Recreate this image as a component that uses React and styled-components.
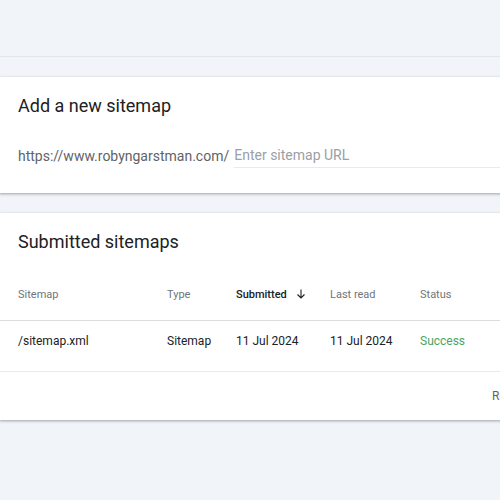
import React from 'react'
import styled, { createGlobalStyle } from 'styled-components'

const Global = createGlobalStyle`
  html, body {
    margin: 0;
    padding: 0;
    background: #f1f4f9;
    overflow: hidden;
    font-family: Roboto, "Liberation Sans", Arial, sans-serif;
  }
`;

const Page = styled.div`
  width: 500px;
  height: 500px;
  overflow: hidden;
`;

const TopBar = styled.div`
  height: 56px;
  border-bottom: 1px solid #e2e5ea;
`;

const Content = styled.div`
  display: flex;
  flex-direction: column;
  gap: 20px;
  padding-top: 20px;
`;

const Card = styled.section`
  width: 560px;
  background: #fff;
  box-shadow: 0 1px 2px rgba(60, 64, 67, 0.3), 0 1px 3px 1px rgba(60, 64, 67, 0.12);
`;

const CardTitle = styled.h2`
  margin: 0;
  padding: 17px 18px 0;
  font-size: 18px;
  line-height: 24px;
  font-weight: 400;
  color: #202124;
`;

const InputRow = styled.div`
  display: flex;
  align-items: flex-end;
  padding: 25px 0 25px 18px;
  gap: 5px;
`;

const Prefix = styled.span`
  font-size: 14px;
  line-height: 24px;
  color: #5f6368;
`;

const UrlInput = styled.input`
  flex: 1;
  border: none;
  border-bottom: 1px solid #e8eaed;
  outline: none;
  padding: 0;
  font-family: inherit;
  font-size: 14px;
  line-height: 24px;
  height: 24px;
  color: #202124;
  background: transparent;
  &::placeholder {
    color: #9aa0a6;
  }
`;

const Row = styled.div`
  display: grid;
  grid-template-columns: 149px 69px 94px 90px 1fr;
  align-items: center;
  padding-left: 18px;
  height: ${p => p.$h}px;
  border-bottom: 1px solid ${p => p.$line};
`;

const HeadCell = styled.div`
  display: flex;
  align-items: center;
  gap: 8px;
  font-size: 11px;
  font-weight: ${p => (p.$active ? 500 : 400)};
  color: ${p => (p.$active ? '#202124' : '#70757a')};
  padding-top: ${p => p.$pt || 0}px;
`;

const Cell = styled.div`
  font-size: 12px;
  color: ${p => p.$color || '#202124'};
  padding-bottom: 10px;
`;

const Footer = styled.div`
  height: 48px;
  display: flex;
  align-items: center;
  padding-left: 492px;
  font-size: 12px;
  color: #5f6368;
  white-space: nowrap;
`;

const ArrowDown = () => (
  <svg width="12" height="12" viewBox="0 0 24 24" fill="none" stroke="#202124" strokeWidth="2.2">
    <path d="M12 3v17M5 13l7 7 7-7" />
  </svg>
);

export default function App() {
  return (
    <Page>
      <Global />
      <TopBar />
      <Content>
        <Card>
          <CardTitle>Add a new sitemap</CardTitle>
          <InputRow>
            <Prefix>https://www.robyngarstman.com/</Prefix>
            <UrlInput placeholder="Enter sitemap URL" />
          </InputRow>
        </Card>
        <Card>
          <CardTitle>Submitted sitemaps</CardTitle>
          <Row $h={66} $line="#dadce0">
            <HeadCell $pt={14}>Sitemap</HeadCell>
            <HeadCell $pt={14}>Type</HeadCell>
            <HeadCell $pt={14} $active>Submitted <ArrowDown /></HeadCell>
            <HeadCell $pt={14}>Last read</HeadCell>
            <HeadCell $pt={14}>Status</HeadCell>
          </Row>
          <Row $h={50} $line="#e8eaed">
            <Cell>/sitemap.xml</Cell>
            <Cell>Sitemap</Cell>
            <Cell>11 Jul 2024</Cell>
            <Cell>11 Jul 2024</Cell>
            <Cell $color="#4aa564">Success</Cell>
          </Row>
          <Footer>Rows per page:</Footer>
        </Card>
      </Content>
    </Page>
  )
}
